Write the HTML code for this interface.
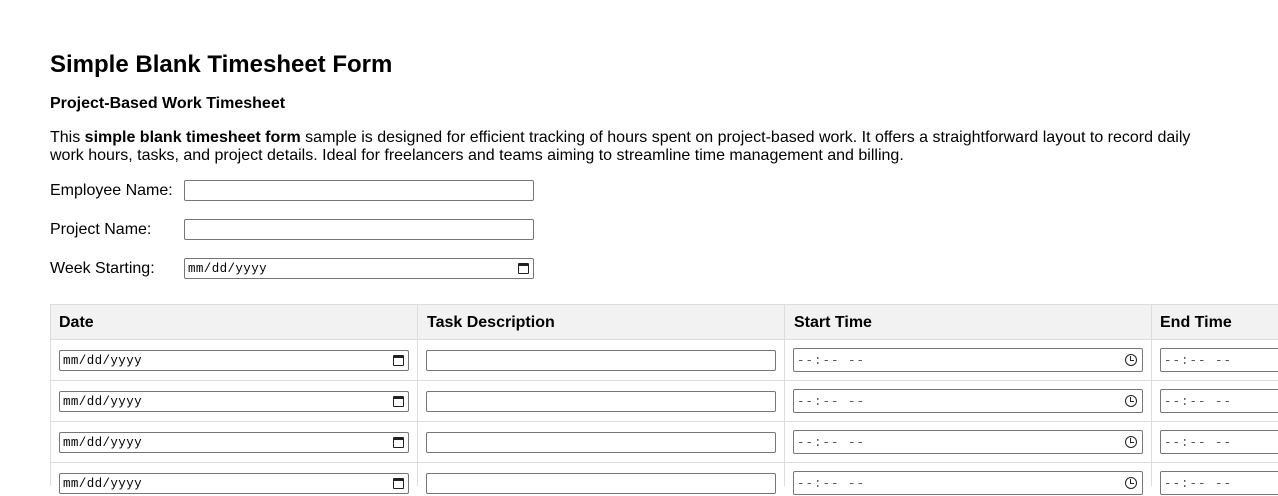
<!DOCTYPE html>
<html><head><meta charset="utf-8"><style>
*{box-sizing:border-box;margin:0;padding:0}
body{width:1278px;height:486px;overflow:hidden;background:#fff;font-family:"Liberation Sans",Arial,sans-serif;color:#000;position:relative}
.a{position:absolute;white-space:nowrap}
.in{position:absolute;border:1px solid #767676;border-radius:2px;background:#fff;font-family:"Liberation Mono",monospace;font-size:12.5px;color:#000;padding-left:3px;line-height:21px;letter-spacing:0.4px}
.cal{position:absolute;right:4px;top:4px;width:11px;height:11px;border:1.5px solid #222;border-top-width:3px;border-radius:1px}
.clk{position:absolute;right:5px;top:5px;width:12px;height:12px;border:1.5px solid #222;border-radius:50%}
.clk:after{content:"";position:absolute;left:3.5px;top:1px;width:3px;height:4px;border-left:1.5px solid #222;border-bottom:1.5px solid #222}
.tm{color:#555;letter-spacing:1px;line-height:24px}
.vl{position:absolute;top:304px;width:1px;height:182px;background:#ddd}
.hl{position:absolute;left:50px;width:1228px;height:1px;background:#ddd}
.th{position:absolute;top:314px;font-weight:bold;font-size:16px}
</style></head><body>
<div class="a" style="left:50px;top:51px;font-size:24px;font-weight:bold">Simple Blank Timesheet Form</div>
<div class="a" style="left:50px;top:95px;font-size:16px;font-weight:bold">Project-Based Work Timesheet</div>
<div class="a" style="left:50px;top:129px;font-size:16px;line-height:18px">This <b>simple blank timesheet form</b> sample is designed for efficient tracking of hours spent on project-based work. It offers a straightforward layout to record daily<br>work hours, tasks, and project details. Ideal for freelancers and teams aiming to streamline time management and billing.</div>
<div class="a" style="left:50px;top:182px;font-size:16px">Employee Name:</div>
<div class="a" style="left:50px;top:221px;font-size:16px">Project Name:</div>
<div class="a" style="left:50px;top:260px;font-size:16px">Week Starting:</div>
<div class="in" style="left:184px;top:180px;width:350px;height:21px"></div>
<div class="in" style="left:184px;top:219px;width:350px;height:21px"></div>
<div class="in" style="left:184px;top:258px;width:350px;height:21px">mm/dd/yyyy<span class="cal"></span></div>

<div style="position:absolute;left:50px;top:304px;width:1228px;height:35px;background:#f2f2f2"></div>
<div class="hl" style="top:304px"></div>
<div class="hl" style="top:339px"></div>
<div class="hl" style="top:380px"></div>
<div class="hl" style="top:421px"></div>
<div class="hl" style="top:462px"></div>
<div class="vl" style="left:50px"></div>
<div class="vl" style="left:417px"></div>
<div class="vl" style="left:784px"></div>
<div class="vl" style="left:1151px"></div>
<div class="th" style="left:59px">Date</div>
<div class="th" style="left:427px">Task Description</div>
<div class="th" style="left:794px">Start Time</div>
<div class="th" style="left:1160px">End Time</div>

<div class="in" style="left:59px;top:350px;width:350px;height:21px">mm/dd/yyyy<span class="cal"></span></div>
<div class="in" style="left:426px;top:350px;width:350px;height:21px"></div>
<div class="in tm" style="left:793px;top:348px;width:350px;height:24px">--:-- --<span class="clk"></span></div>
<div class="in tm" style="left:1160px;top:348px;width:350px;height:24px">--:-- --</div>

<div class="in" style="left:59px;top:391px;width:350px;height:21px">mm/dd/yyyy<span class="cal"></span></div>
<div class="in" style="left:426px;top:391px;width:350px;height:21px"></div>
<div class="in tm" style="left:793px;top:389px;width:350px;height:24px">--:-- --<span class="clk"></span></div>
<div class="in tm" style="left:1160px;top:389px;width:350px;height:24px">--:-- --</div>

<div class="in" style="left:59px;top:432px;width:350px;height:21px">mm/dd/yyyy<span class="cal"></span></div>
<div class="in" style="left:426px;top:432px;width:350px;height:21px"></div>
<div class="in tm" style="left:793px;top:430px;width:350px;height:24px">--:-- --<span class="clk"></span></div>
<div class="in tm" style="left:1160px;top:430px;width:350px;height:24px">--:-- --</div>

<div class="in" style="left:59px;top:473px;width:350px;height:21px">mm/dd/yyyy<span class="cal"></span></div>
<div class="in" style="left:426px;top:473px;width:350px;height:21px"></div>
<div class="in tm" style="left:793px;top:471px;width:350px;height:24px">--:-- --<span class="clk"></span></div>
<div class="in tm" style="left:1160px;top:471px;width:350px;height:24px">--:-- --</div>
</body></html>
